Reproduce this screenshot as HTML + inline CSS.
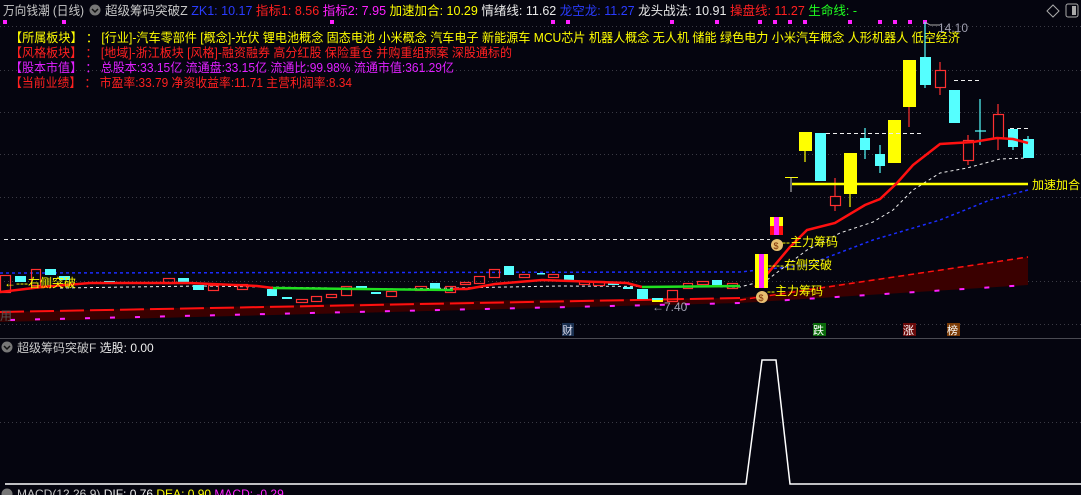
<!DOCTYPE html>
<html><head><meta charset="utf-8"><style>
html,body{margin:0;padding:0;background:#05050f;width:1081px;height:495px;overflow:hidden}
svg{display:block}
text{font-family:"Liberation Sans","Noto Sans CJK SC",sans-serif}
</style></head><body>
<svg width="1081" height="495" viewBox="0 0 1081 495" xmlns="http://www.w3.org/2000/svg">
<rect width="1081" height="495" fill="#05050f"/>
<g stroke="#3a3a44" stroke-dasharray="1,3" stroke-width="1">
<line x1="0" y1="26.5" x2="1081" y2="26.5"/><line x1="0" y1="70.5" x2="1081" y2="70.5"/>
<line x1="0" y1="112.5" x2="1081" y2="112.5"/><line x1="0" y1="154.5" x2="1081" y2="154.5"/>
<line x1="0" y1="197.5" x2="1081" y2="197.5"/><line x1="0" y1="281.5" x2="1081" y2="281.5"/>
<line x1="0" y1="324.5" x2="1081" y2="324.5"/><line x1="0" y1="422.5" x2="1081" y2="422.5"/>
</g>
<line x1="0" y1="338.5" x2="1081" y2="338.5" stroke="#4a4a52"/>
<text x="3" y="15" font-size="12.5" fill="#c8c8c8" textLength="81" lengthAdjust="spacingAndGlyphs">万向钱潮 (日线)</text>
<circle cx="95" cy="10" r="5.5" fill="#777"/><path d="M92 9l3 3 3-3" stroke="#111" fill="none" stroke-width="1.5"/>
<text x="105" y="15" font-size="12.5" textLength="752" lengthAdjust="spacingAndGlyphs"><tspan fill="#c8c8c8">超级筹码突破Z </tspan><tspan fill="#2a3cff">ZK1: 10.17 </tspan><tspan fill="#ff2020">指标1: 8.56 </tspan><tspan fill="#ff20ff">指标2: 7.95 </tspan><tspan fill="#ffff00">加速加合: 10.29 </tspan><tspan fill="#e8e8e8">情绪线: 11.62 </tspan><tspan fill="#2a3cff">龙空龙: 11.27 </tspan><tspan fill="#e8e8e8">龙头战法: 10.91 </tspan><tspan fill="#ff2020">操盘线: 11.27 </tspan><tspan fill="#20ff20">生命线: -</tspan></text>
<path d="M1053 5l6 6-6 6-6-6z" stroke="#aaa" fill="none"/>
<rect x="1066" y="4" width="12" height="13" rx="2" stroke="#aaa" fill="none"/><rect x="1072" y="6" width="4" height="9" fill="#aaa"/>
<g fill="#ff20ff">
<rect x="3" y="20" width="4" height="4"/><rect x="62" y="20" width="4" height="4"/><rect x="330" y="20" width="4" height="4"/>
<rect x="551" y="20" width="4" height="4"/><rect x="566" y="20" width="4" height="4"/><rect x="670" y="20" width="4" height="4"/>
<rect x="715" y="20" width="4" height="4"/><rect x="758" y="20" width="4" height="4"/><rect x="773" y="20" width="4" height="4"/>
<rect x="788" y="20" width="4" height="4"/><rect x="803" y="20" width="4" height="4"/><rect x="848" y="20" width="4" height="4"/>
<rect x="878" y="20" width="4" height="4"/><rect x="893" y="20" width="4" height="4"/><rect x="908" y="20" width="4" height="4"/>
<rect x="923" y="20" width="4" height="4"/>
</g>
<g font-size="12.5">
<text x="10" y="42" fill="#ffff00" textLength="950" lengthAdjust="spacingAndGlyphs">【所属板块】 ： [行业]-汽车零部件 [概念]-光伏 锂电池概念 固态电池 小米概念 汽车电子 新能源车 MCU芯片 机器人概念 无人机 储能 绿色电力 小米汽车概念 人形机器人 低空经济</text>
<text x="10" y="57" fill="#ff2020" textLength="502" lengthAdjust="spacingAndGlyphs">【风格板块】 ： [地域]-浙江板块 [风格]-融资融券 高分红股 保险重仓 并购重组预案 深股通标的</text>
<text x="10" y="72" fill="#e020ff" textLength="444" lengthAdjust="spacingAndGlyphs">【股本市值】 ： 总股本:33.15亿 流通盘:33.15亿 流通比:99.98% 流通市值:361.29亿</text>
<text x="10" y="87" fill="#ff2020" textLength="342" lengthAdjust="spacingAndGlyphs">【当前业绩】 ： 市盈率:33.79 净资收益率:11.71 主营利润率:8.34</text>
</g>
<polygon points="0,312 520,300 740,298 1028,257 1028,285 740,303 0,322" fill="#3a0000"/>
<polyline points="0,312 740,298" stroke="#ff1010" stroke-width="2" fill="none" stroke-dasharray="24,6"/>
<polyline points="740,300 1028,257" stroke="#ff1010" stroke-width="1.5" fill="none" stroke-dasharray="6,4"/>
<polyline points="10,320 740,303 1028,285" stroke="#ff20ff" stroke-width="2" fill="none" stroke-dasharray="5,20"/>
<line x1="4" y1="239.5" x2="770" y2="239.5" stroke="#ddd" stroke-dasharray="4,3"/>
<polyline points="0,273 740,272 807,265 873,240 940,220 990,200 1028,190" stroke="#1a2cff" stroke-width="1.5" fill="none" stroke-dasharray="3,3"/>
<polyline points="60,288 200,286 400,289 560,286 740,287 767,280 807,250 840,233 873,222 893,210 913,190 940,173 967,168 1000,159 1027,158" stroke="#eee" stroke-width="1" fill="none" stroke-dasharray="3,3"/>
<g stroke-width="1.2">
<g fill="none" stroke="#ff3030">
<rect x="0.5" y="275.5" width="10" height="17"/><rect x="31.5" y="269.5" width="9" height="16"/><rect x="163.5" y="278.5" width="11" height="5"/>
<rect x="208.5" y="285.5" width="10" height="5"/><rect x="237.5" y="284.5" width="10" height="5"/><rect x="296.5" y="299.5" width="11" height="3"/>
<rect x="311.5" y="296.5" width="10" height="5"/><rect x="326.5" y="294.5" width="10" height="3"/><rect x="341.5" y="286.5" width="10" height="9"/>
<rect x="386.5" y="291.5" width="10" height="5"/><rect x="415.5" y="286.5" width="11" height="4"/><rect x="445.5" y="286.5" width="10" height="6"/>
<rect x="460.5" y="282.5" width="10" height="2"/><rect x="474.5" y="276.5" width="10" height="7"/><rect x="489.5" y="269.5" width="10" height="8"/>
<rect x="519.5" y="274.5" width="10" height="3"/><rect x="548.5" y="274.5" width="10" height="3"/><rect x="579.5" y="281.5" width="10" height="3"/>
<rect x="593.5" y="281.5" width="11" height="4"/><rect x="667.5" y="290.5" width="10" height="11"/><rect x="683.5" y="283.5" width="9" height="5"/>
<rect x="697.5" y="281.5" width="11" height="3"/><rect x="727.5" y="283.5" width="10" height="5"/>
</g>
<g fill="#55ffff">
<rect x="15" y="276" width="11" height="6"/><rect x="45" y="269" width="11" height="6"/><rect x="59" y="276" width="11" height="4"/>
<rect x="104" y="281" width="11" height="3"/><rect x="178" y="278" width="11" height="5"/><rect x="193" y="285" width="11" height="5"/>
<rect x="267" y="289" width="10" height="7"/><rect x="282" y="297" width="10" height="2"/><rect x="356" y="286" width="11" height="4"/>
<rect x="371" y="292" width="10" height="2"/><rect x="430" y="283" width="10" height="7"/><rect x="504" y="266" width="10" height="9"/>
<rect x="537" y="273" width="8" height="1.5"/><rect x="564" y="275" width="10" height="5"/><rect x="608" y="283" width="11" height="2"/>
<rect x="623" y="287" width="10" height="2"/><rect x="637" y="289" width="11" height="10"/><rect x="652" y="298" width="11" height="3"/>
<rect x="712" y="280" width="10" height="5"/>
</g>
<rect x="652" y="300" width="11" height="2" fill="#ffff00"/>
</g>
<polyline points="0,292 42,287 90,283 189,283 257,286 273,288" stroke="#ff1010" stroke-width="2.5" fill="none"/>
<polyline points="273,288 453,290" stroke="#20e020" stroke-width="2.5" fill="none"/>
<polyline points="453,289 467,289 495,284 542,280 627,283 642,287" stroke="#ff1010" stroke-width="2.5" fill="none"/>
<polyline points="642,287 740,286" stroke="#20e020" stroke-width="2.5" fill="none"/>
<text x="4" y="287" font-size="12" fill="#ffff00">←---右侧突破</text>
<text x="0" y="320" font-size="12" fill="#555">用</text>
<text x="652" y="311" font-size="12" fill="#a0a0b0">←7.40</text>
<g stroke-width="1.2">
<line x1="805" y1="151" x2="805" y2="162" stroke="#ffff00"/><rect x="799" y="132" width="13" height="19" fill="#ffff00"/>
<rect x="815" y="133" width="11" height="48" fill="#55ffff"/>
<line x1="835" y1="178" x2="835" y2="211" stroke="#ff3030"/><rect x="830.5" y="196.5" width="10" height="9" fill="#05050f" stroke="#ff3030"/>
<line x1="850" y1="194" x2="850" y2="207" stroke="#ffff00"/><rect x="844" y="153" width="13" height="41" fill="#ffff00"/>
<line x1="865" y1="128" x2="865" y2="159" stroke="#55ffff"/><rect x="860" y="138" width="10" height="12" fill="#55ffff"/>
<line x1="880" y1="145" x2="880" y2="173" stroke="#55ffff"/><rect x="875" y="154" width="10" height="12" fill="#55ffff"/>
<rect x="888" y="120" width="13" height="43" fill="#ffff00"/>
<line x1="909" y1="107" x2="909" y2="127" stroke="#ff3030"/><rect x="903" y="60" width="13" height="47" fill="#ffff00"/>
<line x1="925" y1="22" x2="925" y2="88" stroke="#55ffff"/><rect x="920" y="57" width="11" height="28" fill="#55ffff"/>
<line x1="940" y1="62" x2="940" y2="95" stroke="#ff3030"/><rect x="935.5" y="70.5" width="10" height="17" fill="#05050f" stroke="#ff3030"/>
<rect x="949" y="90" width="11" height="33" fill="#55ffff"/>
<line x1="968" y1="135" x2="968" y2="165" stroke="#ff3030"/><rect x="963.5" y="140.5" width="10" height="20" fill="#05050f" stroke="#ff3030"/>
<line x1="980" y1="99" x2="980" y2="145" stroke="#55ffff"/><line x1="975" y1="131" x2="986" y2="131" stroke="#55ffff"/>
<line x1="998" y1="104" x2="998" y2="150" stroke="#ff3030"/><rect x="993.5" y="114.5" width="10" height="24" fill="#05050f" stroke="#ff3030"/>
<rect x="1008" y="129" width="10" height="18" fill="#55ffff"/><line x1="1013" y1="147" x2="1013" y2="150" stroke="#55ffff"/>
<line x1="1028" y1="136" x2="1028" y2="158" stroke="#55ffff"/><rect x="1023" y="139" width="11" height="19" fill="#55ffff"/>
</g>
<g stroke="#eee" stroke-dasharray="4,3"><line x1="826" y1="133.5" x2="924" y2="133.5"/><line x1="954" y1="80.5" x2="980" y2="80.5"/><line x1="1010" y1="128.5" x2="1030" y2="128.5"/></g>
<path d="M925 22l5 3h10" stroke="#aaa" fill="none"/><text x="938" y="32" font-size="12" fill="#a0a0b0">14.10</text>
<line x1="785" y1="177.5" x2="798" y2="177.5" stroke="#ffff00"/><line x1="791" y1="177" x2="791" y2="192" stroke="#ccc"/>
<line x1="792" y1="184" x2="1028" y2="184" stroke="#ffff00" stroke-width="2.5"/>
<text x="1032" y="189" font-size="12" fill="#ffff00">加速加合</text>
<polyline points="755,287 763,279 790,247 807,230 835,223 865,205 880,199 897,183 913,165 940,144 973,142 997,138 1013,139 1028,143" stroke="#ff1010" stroke-width="2.5" fill="none"/>
<rect x="755" y="254" width="13" height="34" fill="#ffff00"/><rect x="759" y="254" width="5" height="34" fill="#ff20ff"/>
<rect x="770" y="217" width="13" height="9" fill="#ffff00"/><rect x="770" y="226" width="13" height="9" fill="#ff1010"/><rect x="774" y="217" width="5" height="18" fill="#ff20ff"/>
<circle cx="777" cy="245" r="6" fill="#e8c070"/><text x="773.5" y="249" font-size="9" fill="#7a2a00">$</text>
<circle cx="762" cy="297" r="6" fill="#e8c070"/><text x="758.5" y="301" font-size="9" fill="#7a2a00">$</text>
<text x="782" y="246" font-size="12" fill="#ffff00">--主力筹码</text>
<text x="768" y="269" font-size="12" fill="#ffff00">----右侧突破</text>
<text x="767" y="295" font-size="12" fill="#ffff00">--主力筹码</text>
<rect x="562" y="323" width="12" height="13" fill="#1a3050"/><text x="562" y="334" font-size="11" fill="#dde">财</text>
<rect x="813" y="323" width="13" height="13" fill="#0a6a0a"/><text x="813" y="334" font-size="11" fill="#fff">跌</text>
<rect x="903" y="323" width="13" height="13" fill="#6a0a0a"/><text x="903" y="334" font-size="11" fill="#fff">涨</text>
<rect x="947" y="323" width="13" height="13" fill="#7a3a05"/><text x="947" y="334" font-size="11" fill="#fff">榜</text>
<circle cx="7" cy="347" r="5.5" fill="#777"/><path d="M4 346l3 3 3-3" stroke="#111" fill="none" stroke-width="1.5"/>
<text x="17" y="352" font-size="12"><tspan fill="#c8c8c8">超级筹码突破F </tspan><tspan fill="#eee">选股: 0.00</tspan></text>
<polyline points="5,484 746,484 762,360 776,360 790,484 1081,484" stroke="#fff" stroke-width="1.5" fill="none"/>
<circle cx="7" cy="494" r="5.5" fill="#777"/>
<text x="17" y="498" font-size="12"><tspan fill="#c8c8c8">MACD(12,26,9) </tspan><tspan fill="#eee">DIF: 0.76 </tspan><tspan fill="#ffff00">DEA: 0.90 </tspan><tspan fill="#ff20ff">MACD: -0.29</tspan></text>
</svg>
</body></html>
